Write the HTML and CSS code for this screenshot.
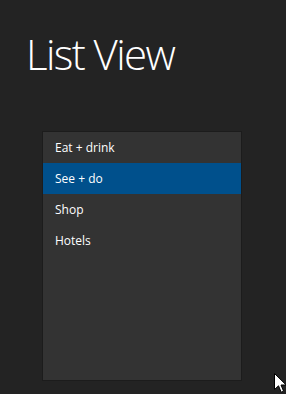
FILE: index.html
```html
<!DOCTYPE html>
<html lang="en">
<head>
<meta charset="utf-8">
<link rel="stylesheet" href="styles.css">
</head>
<body>
<div class="page">
    <h1 class="title">List View</h1>
    <ul class="list">
        <li class="item">Eat + drink</li>
        <li class="item selected">See + do</li>
        <li class="item">Shop</li>
        <li class="item">Hotels</li>
    </ul>
</div>
<svg class="cursor" width="13" height="21" viewBox="0 0 13 21">
    <path d="M0.5 0.5 L0.5 16.5 L4.5 12.8 L7.2 19.2 L9.6 18.2 L7 12 L12.2 12 Z" fill="#fff" stroke="#000" stroke-width="1"/>
</svg>
</body>
</html>
```

FILE: styles.css
```css
html, body {margin:0; padding:0; background:#232323; height:100%; overflow:hidden;}
.page {padding:32px 0 0 42px; font-family:"Open Sans", "Liberation Sans", sans-serif;}
.title {margin:0 0 0 -16px; font-size:42px; font-weight:300; color:#fff; line-height:44px; letter-spacing:-1.6px;}
.list {list-style:none; margin:55px 0 0 0; padding:0; width:198px; height:248px; background:#333; border:1px solid #1c1c1c;}
.item {height:31px; line-height:31px; padding-left:12px; font-size:12px; color:#fff;}
.item.selected {background:#00508c;}
.cursor {position:absolute; left:274px; top:373px;}
```
